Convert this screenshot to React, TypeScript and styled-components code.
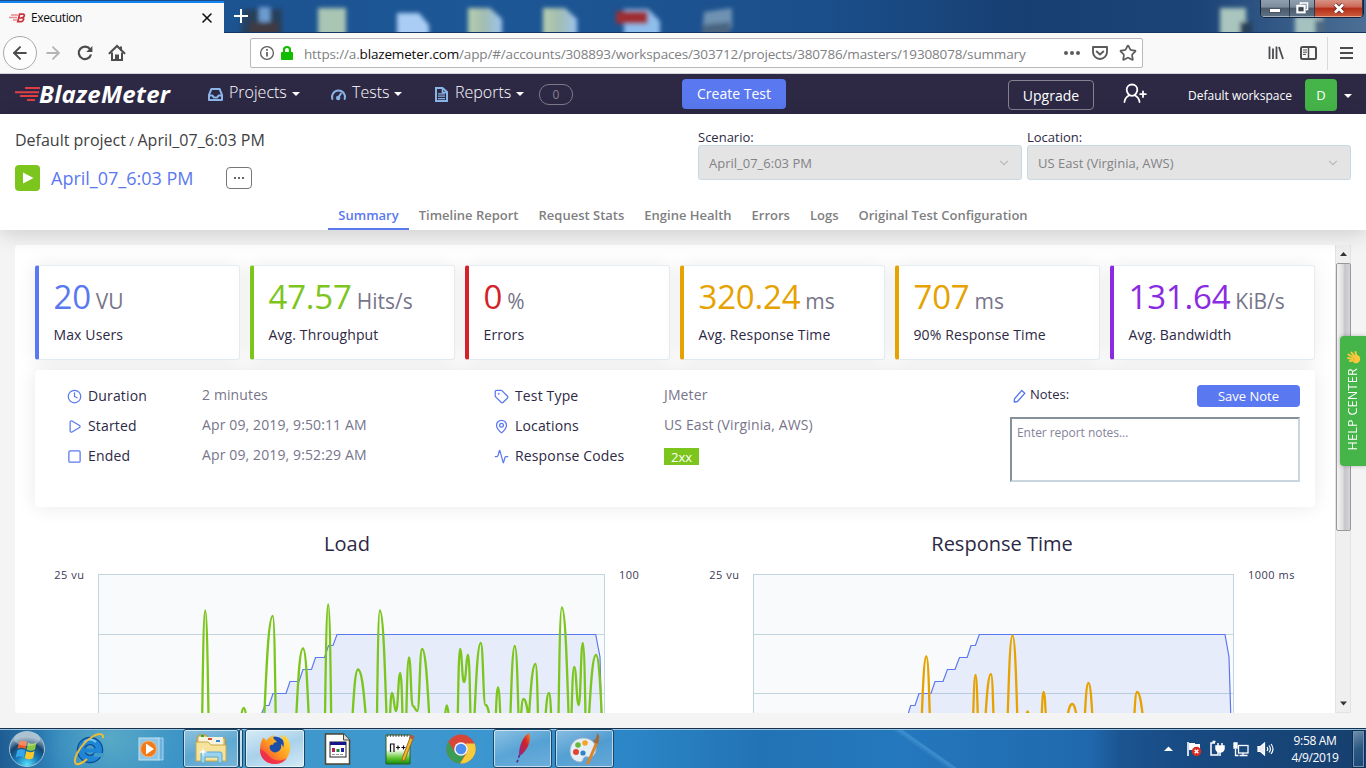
import React from "react";
import styled, { createGlobalStyle } from "styled-components";
import {
  ArrowLeft, ArrowRight, Clock, Play, Square, Tag, MapPin, Activity, ChevronDown, Star, X,
} from "lucide-react";

const GlobalStyle = createGlobalStyle`
  * { box-sizing: border-box; }
  html, body { margin: 0; padding: 0; overflow: hidden; }
  body { font-family: "Open Sans", "Noto Sans", sans-serif; color: #2d2945; background: #f4f4f4; }
  svg { display: block; flex: none; }
`;

const Screen = styled.div`
  width: 1366px;
  height: 768px;
  display: flex;
  flex-direction: column;
  overflow: hidden;
  position: relative;
`;

/* ---------- text helper ---------- */
const Text = styled.span<{ $size: number; $line?: number; $color?: string; $weight?: number; $track?: number; $ml?: number; $mt?: number; $mb?: number }>`
  font-size: ${(p) => p.$size}px;
  line-height: ${(p) => p.$line ?? 20}px;
  color: ${(p) => p.$color ?? "#2d2945"};
  font-weight: ${(p) => p.$weight ?? 400};
  letter-spacing: ${(p) => p.$track ?? 0}px;
  margin: ${(p) => p.$mt ?? 0}px 0 ${(p) => p.$mb ?? 0}px ${(p) => p.$ml ?? 0}px;
  white-space: pre;
`;

/* ---------- browser chrome ---------- */
const TitleBar = styled.div`
  height: 33px;
  flex: none;
  display: flex;
  position: relative;
  background: linear-gradient(90deg, #1b4f8c 0, #1d5796 35%, #1b4f8b 60%, #173f72 75%, #1c4577 88%, #4d6f96 100%);
  border-bottom: 1px solid #143761;
`;
const Backdrop = styled.svg`
  position: absolute;
  left: 224px;
  top: 0;
`;
const BrowserTab = styled.div`
  width: 224px;
  height: 33px;
  background: #f9f9fa;
  border-top: 1px solid #1c4d86;
  box-shadow: inset 0 2px 0 #1383ee;
  display: flex;
  align-items: center;
  padding: 2px 9px 0 9px;
  gap: 5px;
`;
const Grow = styled.div`
  flex: 1;
`;
const NewTab = styled.div`
  position: relative;
  padding: 8px 0 0 9px;
`;
const WindowControls = styled.div`
  position: relative;
  display: flex;
  width: 104px;
  height: 18px;
  margin-right: 2px;
  border: 1px solid #14233a;
  border-top: 0;
  border-radius: 0 0 5px 5px;
  overflow: hidden;
  box-shadow: inset 0 -1px 0 #b9c7d6, inset 1px 0 0 #9fb1c5;
`;
const WindowButton = styled.div<{ $width: number; $close?: boolean }>`
  width: ${(p) => p.$width}px;
  border-right: 1px solid #2a3a50;
  border-bottom: 1px solid ${(p) => (p.$close ? "#e8a08c" : "#9fb0c2")};
  background: ${(p) =>
    p.$close
      ? "linear-gradient(#d79486 0, #cb6553 45%, #b42c16 50%, #c9583a 100%)"
      : "linear-gradient(#8f9fb0 0, #7c8c9c 45%, #4b5a6b 50%, #5d7084 100%)"};
  display: flex;
  align-items: center;
  justify-content: center;
`;
const MinimizeGlyph = styled.div`
  width: 12px;
  height: 5px;
  margin-top: 5px;
  background: #fff;
  border: 1px solid #4a5563;
`;
const Toolbar = styled.div`
  height: 41px;
  flex: none;
  background: #f9f9fa;
  border-bottom: 1px solid #d4d4d8;
  display: flex;
  align-items: center;
  padding-left: 3px;
`;
const BackButton = styled.div`
  width: 34px;
  height: 34px;
  border: 1px solid #a9a9ac;
  border-radius: 50%;
  background: #fdfdfd;
  display: flex;
  align-items: center;
  justify-content: center;
`;
const ToolIcon = styled.div<{ $width: number }>`
  width: ${(p) => p.$width}px;
  display: flex;
  justify-content: center;
`;
const UrlBar = styled.div`
  width: 893px;
  height: 30px;
  margin-left: 117px;
  border: 1px solid #b9b9bc;
  border-radius: 2px;
  background: #fff;
  display: flex;
  align-items: center;
  padding: 0 5px 0 8px;
`;
const LockSlot = styled.div`
  margin: 0 10px 0 4px;
`;
const UrlText = styled.div`
  flex: 1;
  padding-top: 2px;
  font: 13.5px/20px "Open Sans", sans-serif;
  letter-spacing: -0.155px;
  white-space: nowrap;
  color: #808083;
  b { font-weight: 400; color: #0c0c0d; }
`;
const ToolSeparator = styled.div`
  width: 1px;
  height: 33px;
  margin: 0 12px 0 3px;
  background: #d9d9dc;
`;

/* ---------- app navigation ---------- */
const NavBar = styled.nav`
  height: 40px;
  flex: none;
  background: #2d2945;
  display: flex;
  align-items: center;
  position: relative;
`;
const Logo = styled.div`
  width: 207px;
  height: 40px;
  padding-left: 14px;
  display: flex;
  align-items: center;
`;
const LogoText = styled.span`
  font: italic 700 24px/30px "Open Sans", sans-serif;
  color: #fff;
  margin-left: -1px;
  letter-spacing: 0.28px;
`;
const NavItem = styled.div<{ $width: number }>`
  width: ${(p) => p.$width}px;
  display: flex;
  align-items: center;
  padding-bottom: 4px;
  svg { margin-top: 4px; }
`;
const Caret = styled.i<{ $left?: number }>`
  border: 4px solid transparent;
  border-top-color: #fff;
  border-bottom: 0;
  margin: 4px 0 0 ${(p) => p.$left ?? 5}px;
`;
const CountPill = styled.div`
  width: 34px;
  height: 21px;
  border: 1px solid #7d7a8c;
  border-radius: 10px;
  color: #85828f;
  font-size: 12px;
  line-height: 20px;
  text-align: center;
`;
const CreateButton = styled.div`
  width: 104px;
  height: 30px;
  margin-left: 109px;
  background: #5a78f0;
  border-radius: 4px;
  color: #fff;
  font-size: 14px;
  line-height: 30px;
  text-align: center;
`;
const UpgradeButton = styled.div`
  width: 86px;
  height: 30px;
  margin: 2px 0 0 222px;
  border: 1px solid #85828f;
  border-radius: 4px;
  color: #fff;
  font-size: 14px;
  line-height: 29px;
  text-align: center;
`;
const Avatar = styled.div`
  width: 32px;
  height: 32px;
  border-radius: 4px;
  background: #45b549;
  color: #fff;
  font-size: 13px;
  line-height: 32px;
  text-align: center;
  margin: 1px 0 0 13px;
`;

/* ---------- report header ---------- */
const Header = styled.header`
  height: 116px;
  flex: none;
  background: #fff;
  position: relative;
  z-index: 1;
  display: flex;
  flex-direction: column;
  padding: 0 15px;
  box-shadow: 0 4px 20px rgba(0, 0, 0, 0.16);
`;
const HeaderTop = styled.div`
  display: flex;
  gap: 5px;
  height: 86px;
`;
const TitleColumn = styled.div`
  width: 678px;
  padding-top: 15px;
`;
const Crumbs = styled.div`
  display: flex;
  align-items: baseline;
`;
const TitleRow = styled.div`
  display: flex;
  align-items: center;
  margin-top: 13px;
  height: 26px;
`;
const RunButton = styled.div`
  width: 25px;
  height: 26px;
  border-radius: 4px;
  background: #7cc51d;
  display: flex;
  align-items: center;
  justify-content: center;
  margin-right: 11px;
`;
const MoreButton = styled.div`
  width: 26px;
  height: 22px;
  margin-left: 32px;
  border: 1px solid #77777b;
  border-radius: 4px;
  display: flex;
  align-items: center;
  justify-content: center;
  gap: 2px;
  i { width: 2px; height: 2px; background: #66666a; }
`;
const Field = styled.label`
  width: 324px;
  padding-top: 15px;
  display: flex;
  flex-direction: column;
`;
const SelectBox = styled.div`
  height: 35px;
  border: 1px solid #c7d9e3;
  border-radius: 3px;
  background: #e4e4e4;
  display: flex;
  align-items: center;
  justify-content: space-between;
  padding: 1px 10px 0;
`;
const TabRow = styled.div`
  height: 30px;
  display: flex;
  justify-content: center;
`;
const ReportTab = styled.div<{ $active?: boolean }>`
  padding: 0 10px;
  font-size: 13px;
  line-height: 31px;
  font-weight: 600;
  color: ${(p) => (p.$active ? "#5a78f0" : "#7f7f82")};
  border-bottom: 2px solid ${(p) => (p.$active ? "#5a78f0" : "transparent")};
`;

/* ---------- report body ---------- */
const Body = styled.main`
  height: 498px;
  flex: none;
  padding: 15px 15px 15px;
  display: flex;
  background: #f4f4f4;
`;
const Panel = styled.div`
  width: 1320px;
  height: 468px;
  background: #fff;
  border-radius: 4px 0 0 4px;
  padding: 20px 20px 0;
  overflow: hidden;
`;
const CardRow = styled.div`
  display: flex;
  gap: 10px;
`;
const Card = styled.div<{ $color: string }>`
  width: 205px;
  height: 95px;
  background: #fff;
  border: 1px solid #e6edf2;
  border-left: 4px solid ${(p) => p.$color};
  border-radius: 3px;
  padding: 11px 0 0 14.5px;
  box-shadow: 0 0 20px rgba(0, 0, 0, 0.08);
`;
const Figure = styled.div<{ $color: string }>`
  font-size: 33px;
  line-height: 40px;
  letter-spacing: -0.2px;
  color: ${(p) => p.$color};
  white-space: nowrap;
  span { font-size: 21px; letter-spacing: 0; color: #77758a; margin-left: 5px; }
`;
const CardLabel = styled.div`
  font-size: 14px;
  line-height: 20px;
  letter-spacing: 0.12px;
  margin-top: 4px;
`;
const InfoPanel = styled.section`
  height: 137px;
  margin-top: 10px;
  background: #fff;
  border-radius: 4px;
  box-shadow: 0 0 20px rgba(0, 0, 0, 0.09);
  display: flex;
  padding: 11px 15px 0 32px;
  position: relative;
`;
const InfoColumn = styled.div<{ $width: number; $label: number }>`
  width: ${(p) => p.$width}px;
  display: grid;
  grid-template-columns: 21px ${(p) => p.$label}px 1fr;
  grid-auto-rows: 30px;
  align-items: center;
  color: #5a78f0;
`;
const StatusBadge = styled.span`
  width: 35px;
  height: 17px;
  background: #7cc51d;
  color: #fff;
  font-size: 13px;
  line-height: 18px;
  text-align: center;
`;
const NotesColumn = styled.div`
  width: 290px;
  margin-left: 89px;
  padding-top: 4px;
`;
const NotesHead = styled.div`
  display: flex;
  align-items: center;
  height: 22px;
  padding-left: 3px;
`;
const SaveButton = styled.div`
  width: 103px;
  height: 22px;
  background: #5a78f0;
  border-radius: 4px;
  color: #fff;
  font-size: 13px;
  line-height: 22px;
  text-align: center;
`;
const NotesInput = styled.div`
  height: 65px;
  margin-top: 10px;
  border: 2px solid;
  border-color: #84909a #c8d6e0 #c8d6e0 #84909a;
  padding: 5px 5px 0;
  display: flex;
  align-items: flex-start;
`;
const ChartRow = styled.div`
  display: flex;
`;
const ChartBox = styled.section<{ $width: number; $title: number }>`
  width: ${(p) => p.$width}px;
  h2 {
    width: ${(p) => p.$title}px;
    margin: 23px 0 0;
    font-size: 20px;
    line-height: 28px;
    font-weight: 400;
    text-align: center;
  }
`;
const ChartBody = styled.div`
  display: flex;
  align-items: flex-start;
  margin-top: 16px;
`;
const AxisLabel = styled.div<{ $width: number; $right?: boolean }>`
  width: ${(p) => p.$width}px;
  text-align: ${(p) => (p.$right ? "right" : "left")};
  padding: ${(p) => (p.$right ? "0 13.5px 0 0" : "0 0 0 14px")};
  font: 11px/16px "Open Sans", sans-serif;
  letter-spacing: 0.5px;
  margin-top: -7px;
  white-space: nowrap;
  color: #3b3953;
`;
const ScrollTrack = styled.div`
  width: 16px;
  height: 468px;
  background: #efefef;
  border: 1px solid #e3e3e5;
  border-width: 0 1px 1px;
  display: flex;
  flex-direction: column;
  align-items: center;
  justify-content: space-between;
  padding-bottom: 6px;
`;
const ScrollThumb = styled.div`
  width: 15px;
  height: 268px;
  border: 1px solid #98989c;
  border-radius: 2px;
  background: linear-gradient(90deg, #f4f4f5, #dededf 45%, #c6c6ca 60%, #d6d6da);
  margin: 0 -1px 168px;
`;
const HelpTab = styled.div`
  position: absolute;
  right: 0;
  top: 336px;
  width: 26px;
  height: 130px;
  z-index: 2;
  background: #45b549;
  border-radius: 4px 0 0 4px;
  box-shadow: 0 0 4px rgba(0, 0, 0, 0.25);
  display: flex;
  flex-direction: column;
  align-items: center;
  padding-top: 14px;
  span {
    writing-mode: vertical-rl;
    transform: rotate(180deg);
    font-size: 12.5px;
    line-height: 18px;
    letter-spacing: 0.3px;
    margin-top: 3px;
    color: #fff;
    font-weight: 500;
    white-space: nowrap;
  }
`;

/* ---------- taskbar ---------- */
const Taskbar = styled.footer`
  height: 40px;
  flex: none;
  display: flex;
  align-items: center;
  border-top: 1px solid #17324e;
  box-shadow: inset 0 1px 0 #9ac4e0;
  background:
    radial-gradient(ellipse 70px 60px at 110px 10px, rgba(130, 205, 205, 0.45), transparent),
    linear-gradient(35deg, transparent 46%, rgba(110, 190, 240, 0.35) 52%, transparent 54%) 880px 0 / 90px 40px no-repeat,
    linear-gradient(90deg, #1e5d93 0, #3187bd 60px, #4199ca 220px, #3c96cf 480px, #2c87c8 620px, #2273b5 760px, #2478bd 900px, #2068ae 1090px, #1b5591 1120px, #184b84 1180px, #163f6d 1366px);
`;
const TaskSlot = styled.div<{ $width: number }>`
  width: ${(p) => p.$width}px;
  display: flex;
  justify-content: center;
`;
const TaskButton = styled.div<{ $width: number; $ml?: number; $active?: boolean }>`
  width: ${(p) => p.$width}px;
  height: 39px;
  margin-left: ${(p) => p.$ml ?? 0}px;
  border: 1px solid #1b4766;
  border-radius: 3px;
  box-shadow: inset 0 0 0 1px rgba(255, 255, 255, 0.6);
  background: ${(p) =>
    p.$active
      ? "linear-gradient(160deg, #d7ebf6, #a9d1ea 50%, #d3eaf6)"
      : "linear-gradient(160deg, rgba(255,255,255,.42), rgba(255,255,255,.16) 50%, rgba(255,255,255,.28))"};
  display: flex;
  align-items: center;
  justify-content: center;
`;
const TrayArrow = styled.div`
  margin-right: 5px;
`;
const TrayClock = styled.div`
  width: 74px;
  margin-left: 4px;
  text-align: center;
  color: #fff;
  font: 12px/17px "Open Sans", sans-serif;
  letter-spacing: -0.35px;
  padding-top: 1px;
`;
const PeekButton = styled.div`
  width: 13px;
  height: 38px;
  border: 1px solid #0f2d4e;
  box-shadow: inset 0 0 0 1px #6f93b5;
  background: linear-gradient(150deg, #7390ad, #2b5783 50%, #1c4775);
`;

/* ---------- charts ---------- */
type Pt = [number, number];

/* Each wave begins and ends off the bottom edge; inner points are peaks and valleys with flat tangents. */
const wave = (pts: Pt[]) =>
  pts
    .map(([x, y], i) => {
      if (i === 0) return `M${x} ${y}`;
      const [px, py] = pts[i - 1];
      const dx = x - px;
      const dy = y - py;
      const c1: Pt = i === 1 ? [px + dx * 0.25, py + dy * 0.5] : [px + dx * 0.5, py];
      const c2: Pt = i === pts.length - 1 ? [x - dx * 0.25, y - dy * 0.5] : [x - dx * 0.5, y];
      return `C${c1.join(" ")} ${c2.join(" ")} ${x} ${y}`;
    })
    .join("");

const B = 716;
const loadWaves: Pt[][] = [
  [[202.2, B], [205.2, 610.5], [208.5, B]],
  [[241.2, B], [243.7, 708], [246.2, B]],
  [[264.3, B], [272.8, 616], [275.7, B]],
  [[296.3, B], [303, 648.5], [308.7, B]],
  [[325, B], [328.2, 604.5], [331.2, B]],
  [[352.5, B], [358, 669.5], [365.8, B]],
  [[377, B], [379.8, 610.5], [386.5, B]],
  [[390, B], [392, 693], [396, 711], [400.3, 673], [402.5, B]],
  [[406.3, B], [409, 657.5], [412.8, 706], [417.3, 711], [422, 649], [429.2, B]],
  [[445, B], [446.8, 705.5], [448.7, B]],
  [[457.8, B], [460, 649], [464, 682], [468.2, 655], [470.4, B]],
  [[474.5, B], [480.8, 643], [485.5, 705], [489.5, B]],
  [[495.8, B], [498, 687.5], [500.3, B]],
  [[510.4, B], [514.8, 646], [518.5, B]],
  [[521, B], [523.5, 699], [528.3, B]],
  [[529, B], [535.5, 664], [538, B]],
  [[545.5, B], [549, 693], [551.2, B]],
  [[558.5, B], [561.8, 607.5], [568.6, B]],
  [[571.5, B], [574.2, 667], [578.7, 705], [582.8, 643], [585.5, B]],
  [[589, B], [596, 655], [601.8, B]],
];
const responseWaves: Pt[][] = [
  [[921.8, B], [926.4, 656.5], [929.8, B]],
  [[973.2, B], [975.5, 675], [977.8, B]],
  [[985.5, B], [991, 674], [993.5, B]],
  [[1007.7, B], [1012.5, 635.5], [1017.3, B]],
  [[1026.3, B], [1027.6, 711.5], [1029, B]],
  [[1041.7, B], [1043.6, 692], [1045.8, B]],
  [[1067.4, B], [1072.2, 704], [1076.6, B]],
  [[1084.8, B], [1088.4, 683], [1092.4, B]],
  [[1134.3, B], [1137, 692], [1142.8, B]],
];
const loadUsers =
  "M260.5 716L265 705.5H269L273 693.5H286L290 681.5H299L303 669.5H311.5L315.5 657.5H324.5L328.5 645.5H333L337 634.5H595.7L600 657L601.5 716";
const responseUsers =
  "M907.5 716L910.7 705.5H915L919 693.5H931L935 681.5H943L947.4 669.5H955L959.5 657.5H967.2L971 645.5H975.4L979.3 634.5H1225L1229 657L1230.8 716";

const Plot = ({ x, width, users, waves, color }: { x: number; width: number; users: string; waves: Pt[][]; color: string }) => (
  <svg width={width} height={139} viewBox={`${x} 574 ${width} 139`}>
    <rect x={x} y={574} width={width} height={150} fill="#f9fafc" />
    <path d={`M${x} 634.5h${width}M${x} 693.5h${width}`} stroke="#c4d4de" />
    <path d={users + "Z"} fill="#4a74f5" fillOpacity={0.1} />
    <path d={users} fill="none" stroke="#5a78f0" strokeWidth={1.2} />
    <rect x={x + 0.5} y={574.5} width={width - 1} height={160} fill="none" stroke="#c4d4de" />
    <path d={waves.map(wave).join("")} fill="none" stroke={color} strokeWidth={2.3} strokeLinejoin="round" />
  </svg>
);

/* ---------- data ---------- */
const cards = [
  { value: "20", unit: "VU", label: "Max Users", color: "#5a78f0" },
  { value: "47.57", unit: "Hits/s", label: "Avg. Throughput", color: "#7cc51d" },
  { value: "0", unit: "%", label: "Errors", color: "#d3222a" },
  { value: "320.24", unit: "ms", label: "Avg. Response Time", color: "#e5a200" },
  { value: "707", unit: "ms", label: "90% Response Time", color: "#e5a200" },
  { value: "131.64", unit: "KiB/s", label: "Avg. Bandwidth", color: "#8a2be2" },
];
const tabs = ["Summary", "Timeline Report", "Request Stats", "Engine Health", "Errors", "Logs", "Original Test Configuration"];

const ic = { size: 15, strokeWidth: 2 };
const InfoLabel = ({ children }: { children: string }) => <Text $size={14} $track={0.15}>{children}</Text>;
const InfoValue = ({ children }: { children: string }) => <Text $size={14} $track={0.12} $color="#77758a" $mb={2}>{children}</Text>;

/* ---------- drawings ---------- */
const DesktopIcons = () => (
  <Backdrop width={1142} height={32} viewBox="224 0 1142 32">
    <defs>
      <filter id="soft" x="-20%" y="-20%" width="140%" height="140%"><feGaussianBlur stdDeviation="2" /></filter>
      <linearGradient id="doc"><stop offset="0" stopColor="#b7cfae" /><stop offset=".45" stopColor="#a3bdb0" /><stop offset="1" stopColor="#9cc4ee" /></linearGradient>
    </defs>
    <g filter="url(#soft)">
      <path d="M244 9h38v28h-42z" fill="#26405c" />
      <rect x="259" y="7" width="11" height="16" fill="#6d9bd0" />
      <rect x="250" y="22" width="28" height="14" fill="#3f3b42" />
      <path d="M318 8h28v32h-28z" fill="#a9c5b4" />
      <path d="M397 13h22l10 12v15h-32z" fill="#a9cdf4" />
      <path d="M468 8h22l12 11v21h-34z" fill="url(#doc)" />
      <path d="M543 8h22l12 11v21h-34z" fill="url(#doc)" />
      <path d="M624 9h24l12 12v19h-36z" fill="#8fbdec" />
      <rect x="616" y="11" width="32" height="13" rx="3" fill="#9d2d33" />
      <path d="M704 12l28-4v20l-30 8z" fill="#7092b2" />
      <path d="M702 25l28-3v18h-28z" fill="#4a6580" />
      <path d="M1220 8h26v32h-26z" fill="#a9c5bd" />
      <rect x="1240" y="22" width="12" height="18" fill="#263f5b" />
      <path d="M1295 16h28v24h-28z" fill="#a5c2c0" />
      <rect x="1315" y="20" width="10" height="20" fill="#506b84" />
    </g>
  </Backdrop>
);

const RedLines = () => (
  <svg width="26" height="20" viewBox="0 0 26 20" stroke="#df3f43" strokeWidth="2">
    <path d="M11 4h15M1 8.300h24M6 12h18M13 16h8" />
  </svg>
);

const Explorer = () => (
  <svg width="34" height="34" viewBox="0 0 34 34">
    <path d="M3 6l2-3h7l2 3h17v22H3z" fill="#e9cf74" stroke="#b9943a" />
    <rect x="5" y="5" width="24" height="8" fill="#f6f3df" />
    <rect x="7" y="3" width="3" height="2" fill="#36a93f" /><rect x="14" y="6" width="4" height="2" fill="#d94c32" /><rect x="22" y="8" width="4" height="2" fill="#3a83d6" />
    <path d="M2 10h12l3 3h15v16H2z" fill="#f5e39c" stroke="#c9a646" />
    <path d="M7 31v-9q0-2 2-2h17q2 0 2 2v9h-4v-6H11v6z" fill="#9ad3ee" stroke="#5ba7d0" />
    <path d="M9 15l.8 4 4 1-4 1-.8 4-.8-4-4-1 4-1z" fill="#fff" />
  </svg>
);
const Firefox = () => (
  <svg width="32" height="32" viewBox="0 0 32 32">
    <defs><linearGradient id="fx" x1="1" y1="0" x2="0" y2="1"><stop offset="0" stopColor="#ffe23c" /><stop offset=".5" stopColor="#ff9a1f" /><stop offset="1" stopColor="#f0244c" /></linearGradient></defs>
    <circle cx="16" cy="14" r="10.500" fill="#1c4da8" />
    <path d="M4 5c2 0 3 2 3 3 2-3 5-5 8-6-1 2-1 4 1 5l2 2c-2 0-4 1-4 3-3-1-4 2-3 4 1 3 5 4 7 3 3-1 5-4 4-8 2 1 2 3 2 4 2-5 0-10-4-13 2 0 4 1 5 3V2c5 4 7 9 6 16-2 8-8 13-15 13C7 31 1 25 1 17c0-5 1-9 3-12z" fill="url(#fx)" />
    <path d="M1 16c0 9 7 15 15 15 6 0 10-3 12-6-6 4-14 3-18-2-4-4-6-6-9-7z" fill="#ee2450" opacity=".75" />
  </svg>
);
const Chrome = () => (
  <svg width="30" height="30" viewBox="0 0 30 30">
    <circle cx="15" cy="15" r="14.500" fill="#d8463a" />
    <path d="M2.400 7.800A14.500 14.500 0 0 0 14 29.500l6-11-5 3-6-3z" fill="#3a9d53" />
    <path d="M28.600 9.500A14.500 14.500 0 0 1 14 29.500l7.500-12L20 9.500z" fill="#f6cb3c" />
    <circle cx="15" cy="15" r="6.800" fill="#f4f4f4" /><circle cx="15" cy="15" r="5.300" fill="#4b8df0" />
  </svg>
);

export default function App() {
  return (
    <Screen>
      <GlobalStyle />
      <TitleBar>
        <DesktopIcons />
        <BrowserTab>
          <svg width="17" height="10" viewBox="0 0 17 10">
            <path d="M2 2h7M0 4.500h8M4 7h4" stroke="#e58a8c" strokeWidth="1.600" />
            <path d="M10.600 1.200h3.400q1.800.2 1.200 1.900-.4 1.200-1.700 1.500 1.500.5 1 2.100-.5 1.800-2.400 1.900H8.800zM10.300 5h3" fill="none" stroke="#c9343c" strokeWidth="1.700" />
          </svg>
          <Text $size={12} $color="#0c0c0d" $track={-0.4}>Execution</Text>
          <Grow />
          <X size={16} color="#111" strokeWidth={2.400} />
        </BrowserTab>
        <NewTab><svg width="16" height="16" viewBox="0 0 16 16"><path d="M8 1v14M1 8h14" stroke="#fff" strokeWidth="2" /></svg></NewTab>
        <Grow />
        <WindowControls>
          <WindowButton $width={29}><MinimizeGlyph /></WindowButton>
          <WindowButton $width={26}>
            <svg width="13" height="12" viewBox="0 0 13 12" fill="none"><path d="M4.500 2.500V1h7v6.500H10" stroke="#fff" strokeWidth="1.600" /><rect x="1.300" y="3.800" width="7.400" height="6.600" stroke="#fff" strokeWidth="2" /><rect x="3.500" y="6" width="3" height="2" stroke="#333" strokeWidth=".8" /></svg>
          </WindowButton>
          <WindowButton $width={48} $close>
            <svg width="14" height="11" viewBox="0 0 14 11"><path d="M3 1.500l8 8M11 1.500l-8 8" stroke="#5b2a28" strokeWidth="4.400" /><path d="M3 1.500l8 8M11 1.500l-8 8" stroke="#fff" strokeWidth="2.800" /></svg>
          </WindowButton>
        </WindowControls>
      </TitleBar>

      <Toolbar>
        <BackButton><ArrowLeft size={20} color="#4c4c4f" strokeWidth={2.400} /></BackButton>
        <ToolIcon $width={32}><ArrowRight size={20} color="#b5b5b8" strokeWidth={2.200} /></ToolIcon>
        <ToolIcon $width={32}>
          <svg width="16" height="16" viewBox="0 0 16 16" fill="none" stroke="#4c4c4f" strokeWidth="2.200"><path d="M13 4.200A6.200 6.200 0 1 0 14 9.500" /><path d="M15.400 1v6H9.200z" fill="#4c4c4f" stroke="none" /></svg>
        </ToolIcon>
        <ToolIcon $width={32}>
          <svg width="18" height="18" viewBox="0 0 18 18"><path d="M1.500 9.200L9 2l7.500 7.200" fill="none" stroke="#4c4c4f" strokeWidth="2" strokeLinecap="round" /><path d="M4 8.500V16h10V8.500" fill="none" stroke="#4c4c4f" strokeWidth="2" /><path d="M7 16v-5.500h4V16z" fill="#4c4c4f" /><rect x="12" y="2.500" width="2" height="4" fill="#4c4c4f" /></svg>
        </ToolIcon>
        <UrlBar>
          <svg width="16" height="16" viewBox="0 0 16 16"><circle cx="8" cy="8" r="6.400" fill="none" stroke="#5b5b5e" strokeWidth="1.300" /><path d="M8 7v4.500M8 4v1.800" stroke="#5b5b5e" strokeWidth="1.700" /></svg>
          <LockSlot>
            <svg width="15" height="16" viewBox="0 0 15 16"><rect x="2" y="7" width="12" height="8" rx="1" fill="#12bc00" /><path d="M5 8V5a3 3 0 0 1 6 0v3" fill="none" stroke="#12bc00" strokeWidth="2.200" /></svg>
          </LockSlot>
          <UrlText>
            https://a.<b>blazemeter.com</b>/app/#/accounts/308893/workspaces/303712/projects/380786/masters/19308078/summary
          </UrlText>
          <svg width="18" height="6" viewBox="0 0 18 6" fill="#5b5b5e"><circle cx="3" cy="3" r="2" /><circle cx="9" cy="3" r="2" /><circle cx="15" cy="3" r="2" /></svg>
          <ToolIcon $width={38}>
            <svg width="18" height="18" viewBox="0 0 18 18" fill="none" stroke="#5b5b5e" strokeWidth="1.900" strokeLinecap="round" strokeLinejoin="round"><path d="M2 3h14v5a7 7 0 0 1-14 0zM5.700 7.500L9 10.500l3.300-3" /></svg>
          </ToolIcon>
          <Star size={18} color="#5b5b5e" strokeWidth={2.300} />
        </UrlBar>
        <Grow />
        <ToolIcon $width={32}>
          <svg width="16" height="16" viewBox="0 0 16 16" stroke="#4c4c4f" strokeWidth="1.800"><path d="M1.500 1.500V14M5 3.500V14M8.500 1.500V14M11 2l4 12" /></svg>
        </ToolIcon>
        <ToolIcon $width={32}>
          <svg width="17" height="14" viewBox="0 0 17 14" fill="none" stroke="#4c4c4f"><rect x="1" y="1" width="15" height="12" rx="1.500" strokeWidth="2" /><path d="M8.500 1v12" strokeWidth="1.500" /><path d="M3 4h4M3 6.200h4M3 8.400h3" /></svg>
        </ToolIcon>
        <ToolSeparator />
        <svg width="13" height="14" viewBox="0 0 13 14" stroke="#4c4c4f" strokeWidth="2"><path d="M0 2h13M0 7h13M0 12h13" /></svg>
        <ToolIcon $width={13} />
      </Toolbar>

      <NavBar>
        <Logo><RedLines /><LogoText>BlazeMeter</LogoText></Logo>
        <NavItem $width={123}>
          <svg width="17" height="16" viewBox="0 0 17 16" fill="none" stroke="#8bb4e8" strokeWidth="2" strokeLinejoin="round"><path d="M2 8.800L4.400 3h8.200L15 8.800V14H2zM2 9.500h3.500l1.200 2h3.600l1.200-2H15" /></svg>
          <Text $size={16} $color="#fff" $weight={300} $ml={5}>Projects</Text>
          <Caret />
        </NavItem>
        <NavItem $width={104}>
          <svg width="17" height="16" viewBox="0 0 17 16" fill="none" stroke="#8bb4e8" strokeWidth="2"><path d="M2.300 13A6.500 6.500 0 1 1 14.700 13M8 12l3-4.500" strokeLinecap="round" /><circle cx="8.200" cy="12" r="1.200" /></svg>
          <Text $size={16} $color="#fff" $weight={300} $ml={5}>Tests</Text>
          <Caret />
        </NavItem>
        <NavItem $width={105}>
          <svg width="15" height="16" viewBox="0 0 15 16"><path d="M2 2h6.500L13 6v9H2z" fill="none" stroke="#8bb4e8" strokeWidth="2" /><path d="M8.500 2v4.500H13" fill="none" stroke="#8bb4e8" strokeWidth="1.600" /><path d="M4 7.800h7M4 10.200h7M4 12.600h7" stroke="#8bb4e8" strokeWidth="1.300" /></svg>
          <Text $size={16} $color="#fff" $weight={300} $ml={6}>Reports</Text>
          <Caret />
        </NavItem>
        <CountPill>0</CountPill>
        <CreateButton>Create Test</CreateButton>
        <UpgradeButton>Upgrade</UpgradeButton>
        <ToolIcon $width={82}>
          <svg width="24" height="22" viewBox="0 0 24 22" fill="none" stroke="#fff" strokeWidth="1.800" strokeLinecap="round"><path d="M9 1.500c3.300 0 5.300 2.500 5.300 5.300S12 12.800 9 12.800 3.700 9.600 3.700 6.800s2-5.300 5.300-5.300zM1.500 19c.3-4 2.500-5.500 4.700-6.700M16.500 19c-.3-4-2.500-5.500-4.700-6.700M20 8.500v5.500M17.200 11.200h5.600" /></svg>
        </ToolIcon>
        <Text $size={12} $color="#fff" $ml={12} $mt={3}>Default workspace</Text>
        <Avatar>D</Avatar>
        <Caret $left={7} />
      </NavBar>

      <Header>
        <HeaderTop>
          <TitleColumn>
            <Crumbs>
              <Text $size={16} $line={22} $color="#404043">Default project</Text>
              <Text $size={13} $line={22} $color="#404043">{" / "}</Text>
              <Text $size={16} $line={22} $color="#404043" $track={0.05}>April_07_6:03 PM</Text>
            </Crumbs>
            <TitleRow>
              <RunButton><svg width="12" height="12" viewBox="0 0 12 12"><path d="M1 .5L11.500 6 1 11.500z" fill="#fff" /></svg></RunButton>
              <Text $size={18} $line={26} $color="#5a78f0">April_07_6:03 PM</Text>
              <MoreButton><i /><i /><i /></MoreButton>
            </TitleRow>
          </TitleColumn>
          <Field>
            <Text $size={13} $line={16}>Scenario:</Text>
            <SelectBox><Text $size={13} $color="#828285">April_07_6:03 PM</Text><ChevronDown size={14} color="#bcbcbf" /></SelectBox>
          </Field>
          <Field>
            <Text $size={13} $line={16}>Location:</Text>
            <SelectBox><Text $size={13} $color="#828285">US East (Virginia, AWS)</Text><ChevronDown size={14} color="#bcbcbf" /></SelectBox>
          </Field>
        </HeaderTop>
        <TabRow>{tabs.map((t, i) => <ReportTab key={t} $active={i === 0}>{t}</ReportTab>)}</TabRow>
      </Header>

      <Body>
        <Panel>
          <CardRow>
            {cards.map((c) => (
              <Card key={c.label} $color={c.color}>
                <Figure $color={c.color}>{c.value}<span>{c.unit}</span></Figure>
                <CardLabel>{c.label}</CardLabel>
              </Card>
            ))}
          </CardRow>
          <InfoPanel>
            <InfoColumn $width={427} $label={114}>
              <Clock {...ic} /><InfoLabel>Duration</InfoLabel><InfoValue>2 minutes</InfoValue>
              <Play {...ic} /><InfoLabel>Started</InfoLabel><InfoValue>Apr 09, 2019, 9:50:11 AM</InfoValue>
              <Square {...ic} /><InfoLabel>Ended</InfoLabel><InfoValue>Apr 09, 2019, 9:52:29 AM</InfoValue>
            </InfoColumn>
            <InfoColumn $width={427} $label={149}>
              <Tag {...ic} /><InfoLabel>Test Type</InfoLabel><InfoValue>JMeter</InfoValue>
              <MapPin {...ic} /><InfoLabel>Locations</InfoLabel><InfoValue>US East (Virginia, AWS)</InfoValue>
              <Activity {...ic} /><InfoLabel>Response Codes</InfoLabel><StatusBadge>2xx</StatusBadge>
            </InfoColumn>
            <NotesColumn>
              <NotesHead>
                <svg width="13" height="14" viewBox="0 0 13 14" fill="none" stroke="#5a78f0" strokeWidth="1.300" strokeLinejoin="round"><path d="M8.800 1.500l3 2.700-7.300 8.300-3.300.5.300-3.200z" /></svg>
                <Text $size={13} $ml={4} $mb={4}>Notes:</Text>
                <Grow />
                <SaveButton>Save Note</SaveButton>
              </NotesHead>
              <NotesInput><Text $size={12} $line={18} $color="#85839a" $track={-0.05}>Enter report notes...</Text></NotesInput>
            </NotesColumn>
          </InfoPanel>
          <ChartRow>
            <ChartBox $width={655} $title={624}>
              <h2>Load</h2>
              <ChartBody>
                <AxisLabel $width={63} $right>25 vu</AxisLabel>
                <Plot x={98} width={507} users={loadUsers} waves={loadWaves} color="#7cc51d" />
                <AxisLabel $width={60}>100</AxisLabel>
              </ChartBody>
            </ChartBox>
            <ChartBox $width={625} $title={624}>
              <h2>Response Time</h2>
              <ChartBody>
                <AxisLabel $width={63} $right>25 vu</AxisLabel>
                <Plot x={753} width={481} users={responseUsers} waves={responseWaves} color="#e5a200" />
                <AxisLabel $width={70}>1000 ms</AxisLabel>
              </ChartBody>
            </ChartBox>
          </ChartRow>
        </Panel>
        <ScrollTrack>
          <svg width="9" height="16"><path d="M1 11l3.500-4L8 11z" fill="#333" /></svg>
          <ScrollThumb />
          <svg width="9" height="5"><path d="M1 .5h7l-3.500 4z" fill="#333" /></svg>
        </ScrollTrack>
      </Body>

      <HelpTab>
        <svg width="15" height="15" viewBox="0 0 15 15" stroke="#fcc83c" strokeWidth="2" strokeLinecap="round"><path d="M6 9L2 8M6.500 7L2.500 4.500M8 6L5.500 2.500M10 6L9.500 2M4 11l4-1" /><circle cx="10" cy="9" r="3.200" fill="#fcc83c" /><path d="M7 8q2 1 1 3" fill="none" stroke="#de9a20" strokeWidth=".8" /></svg>
        <span>HELP CENTER</span>
      </HelpTab>

      <Taskbar>
        <TaskSlot $width={54}>
          <svg width="38" height="38" viewBox="0 0 38 38">
            <defs><radialGradient id="orb" cx=".5" cy=".95" r=".8"><stop offset="0" stopColor="#57e0fb" /><stop offset=".4" stopColor="#1a7dbb" /><stop offset=".75" stopColor="#15446f" /><stop offset="1" stopColor="#8aa8bd" /></radialGradient></defs>
            <circle cx="19" cy="19" r="17.500" fill="url(#orb)" stroke="#a6c4d6" />
            <path d="M11 12q4-3 8 0l-1.500 7q-4-2.500-8 0z" fill="#ef5a24" />
            <path d="M20 12.500q4 2.500 8.500 0L27 19.500q-4 2.500-8.300 0z" fill="#8cc63f" />
            <path d="M9.200 20.500q4-2.500 8 0l-1.500 7q-4-2.500-8 0z" fill="#35a7e8" />
            <path d="M18.300 21q4 2.500 8.300 0l-1.500 7q-4 2.500-8.300 0z" fill="#fcc728" />
            <ellipse cx="19" cy="9" rx="13" ry="7" fill="#fff" opacity=".3" />
          </svg>
        </TaskSlot>
        <TaskSlot $width={70}>
          <svg width="34" height="34" viewBox="0 0 34 34" fill="none">
            <circle cx="18" cy="18" r="9" stroke="#0b4a94" strokeWidth="8.500" /><circle cx="18" cy="18" r="9" stroke="#1f86d6" strokeWidth="6" />
            <path d="M11 18.500h17" stroke="#1f86d6" strokeWidth="4" /><path d="M22 23h10" stroke="#4199c8" strokeWidth="4" />
            <path d="M12 10q6-5 12 0" stroke="#7cc9f4" strokeWidth="2" />
            <path d="M4 32C0 27 9 12 20 5c6-4 12-4 11 1M4 32c3 1 8-2 11-5" stroke="#eebc34" strokeWidth="2" />
          </svg>
        </TaskSlot>
        <TaskSlot $width={59}>
          <svg width="34" height="28" viewBox="0 0 34 28"><path d="M8 4l18-1v22l-18-1z" fill="#6cb2dd" stroke="#a9d6ef" /><rect x="2" y="3" width="20" height="22" fill="#8cc6e9" stroke="#c3e2f3" /><circle cx="11.500" cy="14" r="8" fill="#f07a1c" stroke="#f9b77b" /><path d="M9 8.500l8 5.500-8 5.500z" fill="#fff" /></svg>
        </TaskSlot>
        <TaskButton $width={56}><Explorer /></TaskButton>
        <TaskButton $width={4} />
        <TaskButton $width={60} $ml={2} $active><Firefox /></TaskButton>
        <TaskSlot $width={64}>
          <svg width="27" height="32" viewBox="0 0 27 32"><path d="M1.500 1h18l6 6v24h-24z" fill="#fff" stroke="#4b4630" strokeWidth="1.500" /><path d="M19.500 1v6h6" fill="#ddd" stroke="#4b4630" /><rect x="6" y="9" width="16" height="15" fill="#fff" stroke="#222" /><rect x="6" y="9" width="16" height="3" fill="#15158c" /><rect x="8" y="15" width="3" height="4" fill="#b1205a" /><rect x="12.500" y="16" width="3" height="3" fill="#188a35" /><rect x="17" y="15" width="3" height="4" fill="#2020a0" /><path d="M8 21.500h12" stroke="#999" strokeDasharray="3 1" /></svg>
        </TaskSlot>
        <TaskSlot $width={60}>
          <svg width="31" height="34" viewBox="0 0 31 34"><defs><linearGradient id="np" x1="0" y1="0" x2="0" y2="1"><stop offset=".5" stopColor="#fff" /><stop offset=".8" stopColor="#5cc52c" /><stop offset="1" stopColor="#1b8a12" /></linearGradient></defs><path d="M2 3h24v29H2z" fill="url(#np)" stroke="#285f23" /><path d="M3 3.500h22" stroke="#555" strokeWidth="2.500" strokeDasharray="1.200 1.600" /><path d="M6.500 20v-8h3.500v8M12 15.500h4M14 13.500v4M17.500 15.500h4M19.500 13.500v4" fill="none" stroke="#111" strokeWidth="1.200" /><path d="M27 3l3 1.500-9 23-3 2 .5-4z" fill="#f0b429" stroke="#8b5a14" strokeWidth=".8" /><path d="M27 3l3 1.500-1.500 3-3-1.500z" fill="#b8574a" /></svg>
        </TaskSlot>
        <TaskSlot $width={64}><Chrome /></TaskSlot>
        <TaskButton $width={59}>
          <svg width="22" height="34" viewBox="0 0 22 34"><defs><linearGradient id="fe" x1="1" y1="0" x2="0" y2="1"><stop offset="0" stopColor="#f08a24" /><stop offset=".4" stopColor="#d3222a" /><stop offset="1" stopColor="#8b2a86" /></linearGradient></defs><path d="M17 1c3 6-1 17-8.500 22.500l-1.500-1C7 14 11 4 17 1z" fill="url(#fe)" /><path d="M7.500 23l-3 9" stroke="#5a2a86" strokeWidth="1.600" strokeDasharray="3 2" /></svg>
        </TaskButton>
        <TaskButton $width={59} $ml={3}>
          <svg width="34" height="34" viewBox="0 0 34 34"><path d="M15 6C7 6 2 12 2 19s5 11 10 11c4 0 2-4 5-5s5 2 8-1c2-2 3-4 3-7 0-6-5-11-13-11z" fill="#e6eef5" stroke="#98b3c9" /><circle cx="8" cy="20" r="3" fill="#e2452f" /><circle cx="10" cy="13" r="2.800" fill="#67b83a" /><circle cx="17" cy="11" r="2.800" fill="#f3a52a" /><circle cx="15" cy="21" r="2.600" fill="#2f84c7" /><path d="M29 10L20 31" stroke="#d8862c" strokeWidth="3" strokeLinecap="round" /><path d="M25 9q4-2 4-8 3 2 2 6 0 4-2 5z" fill="#a3693b" /></svg>
        </TaskButton>
        <Grow />
        <TrayArrow><svg width="9" height="5"><path d="M0 5l4.500-4.500L9 5z" fill="#fff" /></svg></TrayArrow>
        <TaskSlot $width={31}>
          <svg width="16" height="16" viewBox="0 0 16 16"><path d="M2 1v14" stroke="#fff" strokeWidth="1.600" /><path d="M3 2h6v1h5v6H3z" fill="#fff" /><circle cx="10.500" cy="10.500" r="4.700" fill="#d92c1e" /><path d="M8.700 8.700l3.600 3.600M12.300 8.700l-3.600 3.600" stroke="#fff" strokeWidth="1.500" /></svg>
        </TaskSlot>
        <svg width="16" height="17" viewBox="0 0 16 17" fill="none" stroke="#fff" strokeWidth="1.500"><path d="M6 3H2v12h7v-3M3.500 1.500h3" /><path d="M7 6h8v3q-1 3-4 3t-4-3z" fill="#fff" /><path d="M9 6V3M13 6V3M11 12v4" /></svg>
        <TaskSlot $width={32}>
          <svg width="16" height="16" viewBox="0 0 16 16" fill="none" stroke="#fff" strokeWidth="1.300"><rect x="5.500" y="4.500" width="9.500" height="7.500" /><path d="M10 12v2.500M6.500 14.500h8M2.500 8v6.500h3" /><path d="M1 2h3v5H1z" fill="#fff" /></svg>
        </TaskSlot>
        <svg width="17" height="16" viewBox="0 0 17 16" fill="none" stroke="#fff" strokeWidth="1.200"><path d="M1 5.500h2.500L7.500 2v12l-4-3.500H1z" fill="#e8eef4" /><path d="M10 6q1.500 2 0 4M12 4.500q2.800 3.500 0 7M14 3q4 5 0 10" /></svg>
        <TrayClock>9:58 AM<br />4/9/2019</TrayClock>
        <PeekButton />
        <TaskSlot $width={1} />
      </Taskbar>
    </Screen>
  );
}
